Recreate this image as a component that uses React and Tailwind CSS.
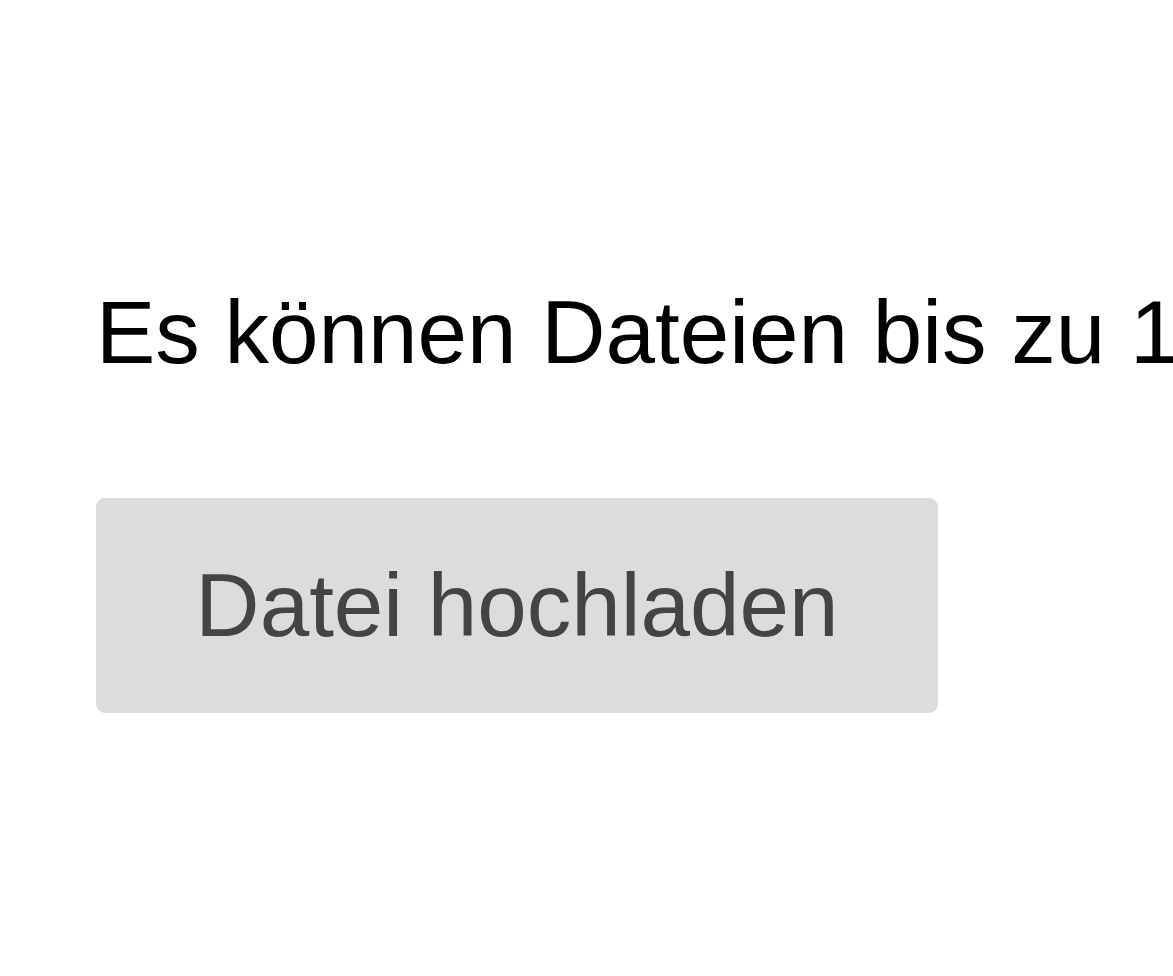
export default function App() {
  return (
    <div className="h-screen w-full overflow-hidden bg-white" style={{ fontFamily: '"Liberation Sans", Arial, sans-serif' }}>
      <div className="pl-[96px] pt-[288px]">
        <p className="whitespace-nowrap text-[89px] leading-[89px] text-black">
          Es können Dateien bis zu 10 MB hochgeladen werden.
        </p>
        <button className="mt-[121px] flex h-[215px] w-[842px] items-center justify-center rounded-[9px] bg-[#dcdcdc] text-[89px] leading-[89px] text-[#444444]">
          Datei hochladen
        </button>
      </div>
    </div>
  );
}
